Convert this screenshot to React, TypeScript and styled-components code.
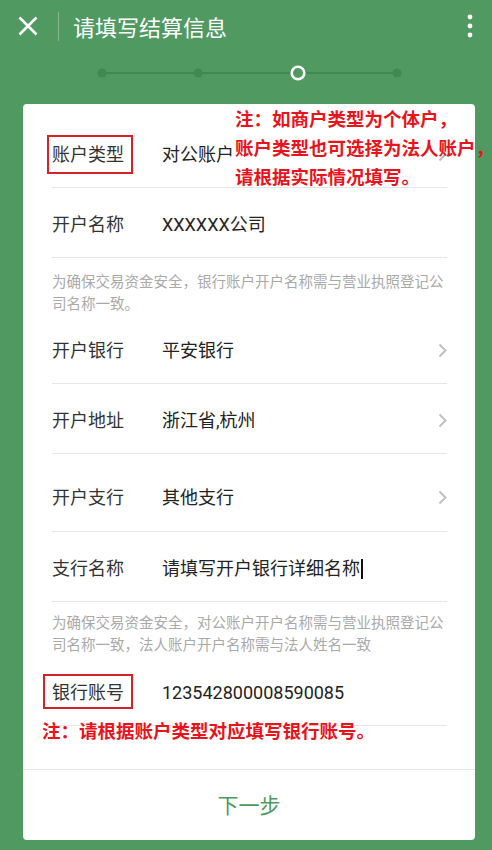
import React from 'react'
import styled, { createGlobalStyle, css } from 'styled-components'

const GREEN = '#509a62'
const DARK_GREEN = '#3f8a52'
const RED = '#e8131b'

const GlobalStyle = createGlobalStyle`
  html, body {
    margin: 0;
    padding: 0;
    background: ${GREEN};
    overflow: hidden;
  }
  body {
    font-family: Roboto, "Noto Sans CJK SC", sans-serif;
  }
`

const Page = styled.div`
  width: 492px;
  height: 850px;
  background: ${GREEN};
`

const Header = styled.header`
  display: flex;
  align-items: center;
  height: 52px;
  color: #fff;
`

const CloseButton = styled.div`
  display: flex;
  margin-left: 18px;
  width: 20px;
  height: 20px;
`

const HeaderDivider = styled.div`
  width: 1px;
  height: 29px;
  margin-left: 20px;
  background: rgba(255, 255, 255, 0.3);
`

const Title = styled.h1`
  margin: 0 0 0 14px;
  font-family: "Noto Sans CJK SC", sans-serif;
  font-size: 22px;
  font-weight: 400;
  line-height: 30px;
`

const MoreButton = styled.div`
  display: flex;
  margin-left: auto;
  margin-right: 19px;
`

const Stepper = styled.div`
  display: flex;
  height: 42px;
  padding-left: 92px;
  margin-bottom: 10px;
`

const Card = styled.section`
  display: flex;
  flex-direction: column;
  width: 452px;
  margin-left: 23px;
  background: #fff;
  border-radius: 4px;
`

const Form = styled.div`
  display: flex;
  flex-direction: column;
  padding: 14px 28px 43px 29px;
`

const Row = styled.div<{ $tall?: boolean }>`
  position: relative;
  display: flex;
  align-items: center;
  box-sizing: border-box;
  height: ${p => (p.$tall ? 78 : 70)}px;
  padding-top: ${p => (p.$tall ? 10 : 4)}px;
  border-bottom: 1px solid #e6e6e6;
`

const LabelCell = styled.div`
  width: 110px;
  flex-shrink: 0;
`

const Label = styled.span<{ $mark?: [number, number, number, number] }>`
  position: relative;
  display: inline-block;
  font-size: 18px;
  line-height: 24px;
  color: #333;
  ${p =>
    p.$mark &&
    css`
      &::after {
        content: '';
        position: absolute;
        top: ${p.$mark[0]}px;
        right: ${p.$mark[1]}px;
        bottom: ${p.$mark[2]}px;
        left: ${p.$mark[3]}px;
        border: 2px solid #d3232a;
        box-sizing: border-box;
      }
    `}
`

const Value = styled.span`
  display: flex;
  align-items: center;
  font-size: 18px;
  line-height: 24px;
  color: #222;
`

const Caret = styled.span`
  display: inline-block;
  width: 2px;
  height: 20px;
  margin-left: 1px;
  background: #111;
`

const Chevron = styled.svg`
  margin-left: auto;
  margin-right: 0;
`

const Hint = styled.p<{ $pad: string }>`
  margin: 0;
  padding: ${p => p.$pad};
  font-family: "Noto Sans CJK SC", sans-serif;
  font-size: 14.5px;
  line-height: 22px;
  color: #a9a9a9;
`

const Annotation = styled.div<{ $top: number; $left: number; $lh: number }>`
  position: absolute;
  top: ${p => p.$top}px;
  left: ${p => p.$left}px;
  white-space: nowrap;
  font-family: "Noto Sans CJK SC", sans-serif;
  font-size: 18.5px;
  font-weight: 700;
  line-height: ${p => p.$lh}px;
  color: ${RED};
`

const Footer = styled.button`
  display: flex;
  align-items: center;
  justify-content: center;
  height: 71px;
  padding: 0 0 2px;
  border: none;
  border-top: 1px solid #e6e6e6;
  background: transparent;
  font-family: "Noto Sans CJK SC", sans-serif;
  font-size: 21px;
  color: #4a995d;
`

const Arrow = () => (
  <Chevron width="9" height="15" viewBox="0 0 9 15">
    <polyline points="1.5,1.5 7.5,7.5 1.5,13.5" fill="none" stroke="#bdbdbd" strokeWidth="1.8" />
  </Chevron>
)

const App = () => {
  return (
    <Page>
      <GlobalStyle />
      <Header>
        <CloseButton>
          <svg width="20" height="20" viewBox="0 0 20 20">
            <path d="M1.5 1.5 L18.5 18.5 M18.5 1.5 L1.5 18.5" stroke="#fff" strokeWidth="2.6" />
          </svg>
        </CloseButton>
        <HeaderDivider />
        <Title>请填写结算信息</Title>
        <MoreButton>
          <svg width="6" height="24" viewBox="0 0 6 24">
            <circle cx="3" cy="3" r="2.4" fill="#fff" />
            <circle cx="3" cy="12" r="2.4" fill="#fff" />
            <circle cx="3" cy="21" r="2.4" fill="#fff" />
          </svg>
        </MoreButton>
      </Header>

      <Stepper>
        <svg width="315" height="42" viewBox="0 0 315 42">
          <line x1="10" y1="21" x2="305" y2="21" stroke={DARK_GREEN} strokeWidth="2.2" />
          <circle cx="10" cy="21" r="4.6" fill={DARK_GREEN} />
          <circle cx="106" cy="21" r="4.6" fill={DARK_GREEN} />
          <circle cx="206" cy="21" r="6.3" fill={GREEN} stroke="#fff" strokeWidth="2.6" />
          <circle cx="305" cy="21" r="4.6" fill={DARK_GREEN} />
        </svg>
      </Stepper>

      <Card>
        <Form>
          <Row>
            <LabelCell>
              <Label $mark={[-7.5, -9, -7.5, -5]}>账户类型</Label>
            </LabelCell>
            <Value>对公账户</Value>
            <Arrow />
            <Annotation $top={-14.5} $left={183} $lh={29}>
              注：如商户类型为个体户，
              <br />
              账户类型也可选择为法人账户，
              <br />
              请根据实际情况填写。
            </Annotation>
          </Row>
          <Row>
            <LabelCell>
              <Label>开户名称</Label>
            </LabelCell>
            <Value>XXXXXX公司</Value>
          </Row>
          <Hint $pad="12px 0 0">为确保交易资金安全，银行账户开户名称需与营业执照登记公司名称一致。</Hint>
          <Row>
            <LabelCell>
              <Label>开户银行</Label>
            </LabelCell>
            <Value>平安银行</Value>
            <Arrow />
          </Row>
          <Row>
            <LabelCell>
              <Label>开户地址</Label>
            </LabelCell>
            <Value>浙江省,杭州</Value>
            <Arrow />
          </Row>
          <Row $tall>
            <LabelCell>
              <Label>开户支行</Label>
            </LabelCell>
            <Value>其他支行</Value>
            <Arrow />
          </Row>
          <Row>
            <LabelCell>
              <Label>支行名称</Label>
            </LabelCell>
            <Value>
              请填写开户银行详细名称
              <Caret />
            </Value>
          </Row>
          <Hint $pad="9px 0 1px">为确保交易资金安全，对公账户开户名称需与营业执照登记公司名称一致，法人账户开户名称需与法人姓名一致</Hint>
          <Row>
            <LabelCell>
              <Label $mark={[-6.5, -9, -4.5, -9]}>银行账号</Label>
            </LabelCell>
            <Value>123542800008590085</Value>
            <Annotation $top={61} $left={-10} $lh={26}>
              注：请根据账户类型对应填写银行账号。
            </Annotation>
          </Row>
        </Form>
        <Footer>下一步</Footer>
      </Card>
    </Page>
  )
}

export default App
